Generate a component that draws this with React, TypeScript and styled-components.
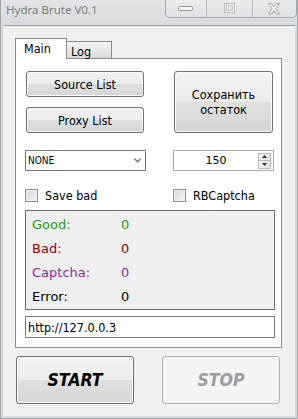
import React from 'react'
import styled, { createGlobalStyle, css } from 'styled-components'

const GlobalStyle = createGlobalStyle`
  * { box-sizing: border-box; }
  html, body { margin: 0; padding: 0; background: #ffffff; }
  body {
    font-family: 'DejaVu Sans Condensed', 'DejaVu Sans', sans-serif;
    font-size: 12.5px;
    color: #000000;
  }
`

const Window = styled.div`
  width: 298px;
  height: 419px;
  display: flex;
  flex-direction: column;
  background: #d8dbde;
  border: 1px solid #a2a7ac;
  border-top: none;
`

const TitleBar = styled.div`
  height: 25px;
  display: flex;
  align-items: flex-start;
  padding-left: 5px;
  background: linear-gradient(to bottom, #e1e3e5, #d8dbde);
`

const Title = styled.div`
  font-family: 'Noto Sans', sans-serif;
  font-size: 11.5px;
  line-height: 14px;
  padding-top: 3px;
  color: #7c7c7c;
`

const Controls = styled.div`
  margin-left: auto;
  display: flex;
  height: 18px;
  border: 1px solid #a6aaaf;
  border-top: none;
  border-radius: 0 0 5px 5px;
  background: linear-gradient(to bottom, #e9ebed, #dfe2e5);
  overflow: hidden;
`

const CtrlButton = styled.div<{ $w: number }>`
  width: ${(p) => p.$w}px;
  height: 100%;
  display: flex;
  align-items: center;
  justify-content: center;
  & + & {
    border-left: 1px solid #b5b9bd;
  }
`

const FrameBody = styled.div`
  flex: 1;
  display: flex;
  padding: 0 2px 2px 2px;
`

const Client = styled.div`
  flex: 1;
  display: flex;
  flex-direction: column;
  background: #f0f0f0;
  border-top: 1px solid #9a9ea3;
  padding: 12px 0 0 12px;
`

const TabControl = styled.div`
  width: 267px;
  display: flex;
  flex-direction: column;
`

const TabStrip = styled.div`
  height: 20px;
  display: flex;
  align-items: flex-end;
`

const Tab = styled.div<{ $active?: boolean }>`
  position: relative;
  display: flex;
  align-items: center;
  border: 1px solid #898c95;
  border-bottom: none;
  ${(p) =>
    p.$active
      ? css`
          z-index: 1;
          width: 52px;
          height: 21px;
          margin-bottom: -1px;
          padding: 0 0 1px 8px;
          background: #ffffff;
        `
      : css`
          width: 45px;
          height: 17px;
          border-left: none;
          padding: 2px 0 0 4px;
          background: linear-gradient(to bottom, #f3f3f3, #e9e9e9 50%, #d9d9d9);
        `}
`

const Panel = styled.div`
  display: flex;
  flex-direction: column;
  background: #ffffff;
  border: 1px solid #898c95;
  padding: 12px 6px 9px 9px;
`

const Columns = styled.div<{ $gap?: number; $h?: number }>`
  display: grid;
  grid-template-columns: 148px 101px;
  margin-top: ${(p) => p.$gap ?? 0}px;
  ${(p) => p.$h && `height: ${p.$h}px;`}
`

const Stack = styled.div`
  display: flex;
  flex-direction: column;
  gap: 10px;
`

const Button = styled.div<{ $w: number; $h: number; $big?: boolean; $disabled?: boolean; $indent?: number }>`
  width: ${(p) => p.$w}px;
  height: ${(p) => p.$h}px;
  margin-left: ${(p) => p.$indent ?? 0}px;
  display: flex;
  align-items: center;
  justify-content: center;
  text-align: center;
  line-height: 15px;
  border-radius: 3px;
  border: 1px solid #707070;
  background: linear-gradient(to bottom, #f2f2f2 0%, #ececec 50%, #e0e0e0 50%, #d5d5d5 100%);
  box-shadow: inset 0 0 0 1px #fbfbfb;
  ${(p) =>
    p.$big &&
    css`
      font-weight: bold;
      font-style: italic;
      font-size: 17.5px;
    `}
  ${(p) =>
    p.$disabled &&
    css`
      border-color: #adb2b5;
      background: #f4f4f4;
      box-shadow: none;
      color: #9a9da2;
    `}
`

const Combo = styled.div`
  width: 121px;
  height: 21px;
  display: flex;
  align-items: center;
  justify-content: space-between;
  padding: 0 4px 0 2px;
  border: 1px solid #767676;
  background: #ffffff;
  font-size: 10px;
`

const Numeric = styled.div`
  width: 101px;
  height: 21px;
  display: flex;
  align-items: center;
  border: 1px solid #acacac;
  background: #ffffff;
  padding-right: 2px;
`

const NumericValue = styled.div`
  flex: 1;
  text-align: center;
  font-family: 'DejaVu Sans', sans-serif;
  font-size: 11px;
`

const Spinner = styled.div`
  width: 13px;
  height: 16px;
  display: flex;
  flex-direction: column;
  border: 1px solid #b9b9b9;
  background: linear-gradient(to right, #f4f4f4, #e2e2e2);
`

const SpinHalf = styled.div`
  flex: 1;
  display: flex;
  align-items: center;
  justify-content: center;
  & + & {
    border-top: 1px solid #b9b9b9;
  }
`

const CheckItem = styled.label`
  display: flex;
  align-items: center;
  gap: 7px;
  height: 13px;
`

const CheckBox = styled.span`
  width: 13px;
  height: 13px;
  border: 1px solid #8e8f8f;
  background: linear-gradient(135deg, #d6d6d6, #f6f6f6);
  box-shadow: inset 0 0 0 1px #f0f0f0;
`

const Stats = styled.div`
  margin-top: 8px;
  height: 100px;
  border: 1px solid #6a6a6a;
  background: #efefef;
  padding: 1px 0 1px 6px;
  display: flex;
  flex-direction: column;
  font-family: 'DejaVu Sans', sans-serif;
  font-size: 13px;
`

const toneColors: Record<string, string> = {
  good: '#219a21',
  bad: '#990000',
  captcha: '#962896',
  error: '#000000',
}

const StatRow = styled.div<{ $tone: string }>`
  height: 24px;
  display: grid;
  grid-template-columns: 89px auto;
  align-items: center;
  color: ${(p) => toneColors[p.$tone]};
`

const UrlBox = styled.div`
  margin-top: 6px;
  height: 22px;
  display: flex;
  align-items: center;
  padding-left: 2px;
  border: 1px solid #7a7a7a;
  background: #ffffff;
`

const BottomRow = styled.div`
  display: flex;
  gap: 28px;
  margin-top: 8px;
  padding-left: 1px;
`

const stats = [
  { tone: 'good', label: 'Good:', value: 0 },
  { tone: 'bad', label: 'Bad:', value: 0 },
  { tone: 'captcha', label: 'Captcha:', value: 0 },
  { tone: 'error', label: 'Error:', value: 0 },
]

export default function App() {
  return (
    <>
      <GlobalStyle />
      <Window>
        <TitleBar>
          <Title>Hydra Brute V0.1</Title>
          <Controls>
            <CtrlButton $w={40}>
              <svg width="16" height="6" viewBox="0 0 16 6">
                <rect x="0.5" y="0.5" width="14" height="4" rx="1" fill="#f6f6f6" stroke="#8f9398" />
              </svg>
            </CtrlButton>
            <CtrlButton $w={46}>
              <svg width="12" height="11" viewBox="0 0 12 11">
                <rect x="0.5" y="0.5" width="10" height="9" fill="#eceef0" stroke="#b9bdc1" />
                <rect x="2.5" y="2.5" width="6" height="5" fill="#dfe2e5" stroke="#c6c9cc" />
              </svg>
            </CtrlButton>
            <CtrlButton $w={44}>
              <svg width="13" height="12" viewBox="0 0 13 12">
                <polygon
                  points="0.5,0.5 3.5,0.5 6,3.8 8.5,0.5 11.5,0.5 7.8,5.8 11.5,11.2 8.5,11.2 6,7.8 3.5,11.2 0.5,11.2 4.2,5.8"
                  fill="#f7f7f7"
                  stroke="#9ea2a6"
                />
              </svg>
            </CtrlButton>
          </Controls>
        </TitleBar>
        <FrameBody>
          <Client>
            <TabControl>
              <TabStrip>
                <Tab $active>Main</Tab>
                <Tab>Log</Tab>
              </TabStrip>
              <Panel>
                <Columns $h={62}>
                  <Stack>
                    <Button $w={118} $h={26} $indent={1}>Source List</Button>
                    <Button $w={118} $h={26} $indent={1}>Proxy List</Button>
                  </Stack>
                  <Button $w={99} $h={62} $indent={1}>
                    Сохранить
                    <br />
                    остаток
                  </Button>
                </Columns>
                <Columns $gap={17}>
                  <Combo>
                    <span>NONE</span>
                    <svg width="7" height="5" viewBox="0 0 7 5">
                      <path d="M0.5 0.8 L3.5 3.8 L6.5 0.8" fill="none" stroke="#6e6e6e" strokeWidth="1.4" />
                    </svg>
                  </Combo>
                  <Numeric>
                    <NumericValue>150</NumericValue>
                    <Spinner>
                      <SpinHalf>
                        <svg width="5" height="3" viewBox="0 0 5 3">
                          <path d="M0 3 L2.5 0 L5 3 Z" fill="#303030" />
                        </svg>
                      </SpinHalf>
                      <SpinHalf>
                        <svg width="5" height="3" viewBox="0 0 5 3">
                          <path d="M0 0 L2.5 3 L5 0 Z" fill="#303030" />
                        </svg>
                      </SpinHalf>
                    </Spinner>
                  </Numeric>
                </Columns>
                <Columns $gap={18}>
                  <CheckItem>
                    <CheckBox />
                    Save bad
                  </CheckItem>
                  <CheckItem>
                    <CheckBox />
                    RBCaptcha
                  </CheckItem>
                </Columns>
                <Stats>
                  {stats.map((s) => (
                    <StatRow key={s.tone} $tone={s.tone}>
                      <span>{s.label}</span>
                      <span>{s.value}</span>
                    </StatRow>
                  ))}
                </Stats>
                <UrlBox>http://127.0.0.3</UrlBox>
              </Panel>
            </TabControl>
            <BottomRow>
              <Button $w={118} $h={48} $big>START</Button>
              <Button $w={118} $h={48} $big $disabled>STOP</Button>
            </BottomRow>
          </Client>
        </FrameBody>
      </Window>
    </>
  )
}
